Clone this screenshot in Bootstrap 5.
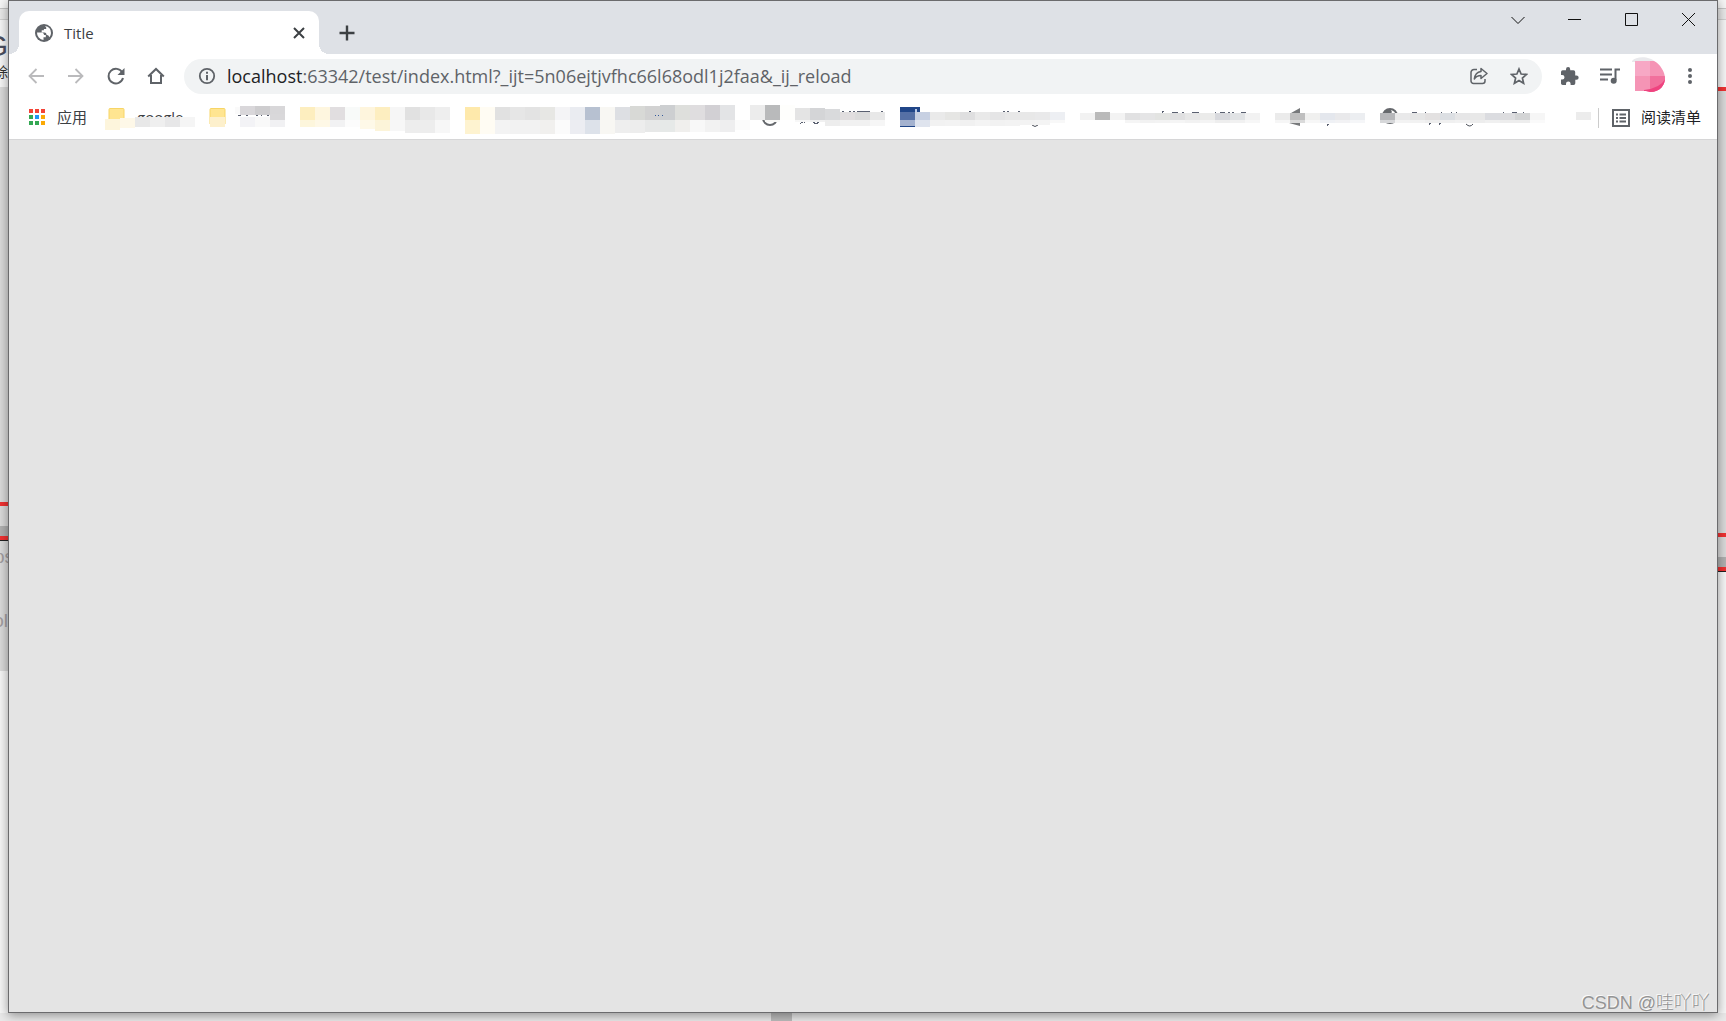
<!DOCTYPE html>
<html lang="zh-CN">
<head>
<meta charset="utf-8">
<meta name="viewport" content="width=device-width, initial-scale=1">
<title>Title</title>
<link href="https://cdn.jsdelivr.net/npm/bootstrap@5.3.0/dist/css/bootstrap.min.css" rel="stylesheet">
<style>
  body { font-family: "Open Sans", "Noto Sans CJK SC", sans-serif; background: #ebebeb; color: #3c4043; }
  svg { display: block; flex: none; }
  .edge { width: 8px; flex: none; }
  .edge > div { flex: none; overflow: hidden; white-space: nowrap; }
  .h8 { height: 8px; } .h12 { height: 12px; } .h20 { height: 20px; }
  .paper { background: #f6f6f6; }
  .band { background: #e9e9e9; border-top: 1px solid #c4c4c4; border-bottom: 1px solid #d0d0d0; }
  .shade { background: #dadada; }
  .thumb { background: #b0b0b0; height: 10px; }
  .redline { background: #f03232; height: 4px; }
  .blackline { border-bottom: 1px solid #222; }
  .left-head { height: 67px; padding-top: 10px; }
  .left-mid { height: 415px; }
  .left-low { height: 130px; color: #a39ea0; font: 19px/24px "Liberation Sans", sans-serif; padding-top: 4px; }
  .right-head { height: 67px; }
  .right-mid { height: 442px; }
  .clip-end { display: flex; justify-content: flex-end; }
  .clip-mid { display: flex; justify-content: center; }
  .big-letter { font: 30px/32px "Liberation Sans", sans-serif; color: #4d5060; }
  .cjk-cut { font-size: 14px; line-height: 20px; color: #333; }
  .low-text { margin-bottom: 40px; }
  .window { border: 1px solid #6b6b6d; box-shadow: 0 2px 10px rgba(0,0,0,.4); min-width: 0; z-index: 1; }
  .bottom-edge { height: 8px; background: #e9e9e9; padding-left: 45%; }
  .scroll-thumb { width: 21px; height: 8px; margin-left: -6px; background: #bcbcbc; }
  .tabstrip { background: #dee1e6; height: 53px; }
  .tab { width: 300px; height: 43px; margin: 10px 0 0 10px; padding: 0 14px 0 16px; background: #fff; border-radius: 10px 10px 0 0; position: relative; }
  .tab::before, .tab::after { content: ""; position: absolute; bottom: 0; width: 10px; height: 10px; }
  .tab::before { right: 100%; background: radial-gradient(circle at 0 0, transparent 10px, #fff 10px); }
  .tab::after { left: 100%; background: radial-gradient(circle at 100% 0, transparent 10px, #fff 10px); }
  .tab-title { font-size: 15px; line-height: 20px; margin-left: 11px; }
  .plain { border: 0; background: none; padding: 0; display: flex; align-items: center; justify-content: center; flex: none; color: #5f6368; }
  .newtab { width: 36px; height: 43px; margin: 10px 0 0 10px; }
  .cap { width: 57px; height: 37px; color: #111; }
  .toolbar { height: 44px; padding: 0 7px 0 7px; }
  .tool { width: 40px; height: 40px; }
  .faint { color: #bababc; }
  .omnibox { height: 35px; background: #f1f3f4; border-radius: 18px; margin-left: 8px; padding: 0 3px 0 14px; min-width: 0; }
  .url { font-size: 18px; line-height: 24px; padding-bottom: 1px; color: #5f6368; margin-left: 11px; outline: none; min-width: 0; white-space: nowrap; overflow: hidden; }
  .url span { color: #202124; }
  .bookmarks { height: 42px; padding: 0 16px 2px 20px; border-bottom: 1px solid #d6d6d7; background: #fff; }
  .bm { color: #3c4043; text-decoration: none; font-size: 15px; line-height: 20px; flex: none; position: relative; }
  .bm-row { gap: 15px; min-width: 0; overflow: hidden; height: 36px; align-items: center; }
  .bm svg { overflow: visible; }
  .folder-name { position: absolute; left: 32px; top: 7px; }
  .cover { position: relative; }
  .apps { width: 61px; gap: 11px; }
  .rule { width: 1px; height: 20px; background: #ccc; flex: none; }
  .reading { font-size: 15px; line-height: 20px; gap: 11px; color: #202124; margin-left: 13px; }
  .apps span, .reading span { padding-bottom: 2px; }
  .page { background: #e4e4e4; padding: 0 7px 0 0; }
  .watermark { font: 300 18px/18px "Liberation Sans", "Noto Sans CJK SC", sans-serif; color: #949494; text-shadow: -1px -1px 0 #fafafa; }
</style>
<script src="https://cdn.jsdelivr.net/npm/bootstrap@5.3.0/dist/js/bootstrap.bundle.min.js"></script>
</head>
<body class="vh-100 d-flex flex-column overflow-hidden">
<div class="d-flex flex-grow-1">
  <div class="edge d-flex flex-column">
    <div class="paper h8"></div><div class="band h12"></div>
    <div class="paper left-head">
      <div class="clip-end big-letter">G</div>
      <div class="cjk-cut clip-end">除</div>
    </div>
    <div class="shade left-mid"></div>
    <div class="redline"></div><div class="shade h20"></div><div class="thumb"></div>
    <div class="redline"></div><div class="blackline"></div>
    <div class="shade left-low"><div class="low-text clip-mid">ps</div><div class="clip-end">ol</div></div>
    <div class="paper flex-grow-1"></div>
  </div>

  <div class="window flex-grow-1 d-flex flex-column">
    <header class="tabstrip d-flex align-items-start">
      <div class="tab d-flex align-items-center">
        <svg width="18" height="18" viewBox="0 0 18 18"><circle cx="9" cy="9" r="9" fill="#5f6368"/><path d="M2 8.500h4.200q2.800 0 2.800 2.500h1.800v2.200H8.500V16A7.200 7.200 0 0 1 2 8.500zM10 2q6 .8 6 7-.1 2.500-1.500 4.300-.8-2.600-3-2.600 0-2.200-2-2.200H6.700V6.300h2.200V5h2.300V3.500z" fill="#fff"/></svg>
        <span class="tab-title flex-grow-1">Title</span>
        <button class="plain" aria-label="关闭标签页"><svg width="12" height="12" viewBox="0 0 12 12" stroke="#3c4043" stroke-width="2"><path d="M1 1l10 10M11 1L1 11"/></svg></button>
      </div>
      <button class="plain newtab" aria-label="新标签页"><svg width="16" height="16" viewBox="0 0 16 16" stroke="#3c4043" stroke-width="2.400"><path d="M8 .5v15M.5 8h15"/></svg></button>
      <div class="d-flex ms-auto">
        <button class="plain cap" aria-label="搜索标签页"><svg width="14" height="14" viewBox="0 0 14 14" fill="none" stroke="currentColor"><path d="M.5 4L7 10.500 13.500 4"/></svg></button>
        <button class="plain cap" aria-label="最小化"><svg width="13" height="13" viewBox="0 0 13 13" stroke="currentColor"><path d="M0 6.500h13"/></svg></button>
        <button class="plain cap" aria-label="最大化"><svg width="13" height="13" viewBox="0 0 13 13" fill="none" stroke="currentColor"><path d="M.5.5h12v12H.5z"/></svg></button>
        <button class="plain cap" aria-label="关闭"><svg width="13" height="13" viewBox="0 0 13 13" stroke="currentColor"><path d="M0 0l13 13M13 0L0 13"/></svg></button>
      </div>
    </header>

    <nav class="toolbar bg-white d-flex align-items-center">
      <button class="plain tool faint" aria-label="后退"><svg width="16" height="16" viewBox="0 0 16 16" fill="none" stroke="currentColor" stroke-width="1.800"><path d="M16 8H1.500M8.500 1l-7 7 7 7"/></svg></button>
      <button class="plain tool faint" aria-label="前进"><svg width="16" height="16" viewBox="0 0 16 16" fill="none" stroke="currentColor" stroke-width="1.800"><path d="M0 8h14.500M7.500 1l7 7-7 7"/></svg></button>
      <button class="plain tool" aria-label="重新加载"><svg width="18" height="18" viewBox="0 0 18 18"><path d="M15.300 5.500A7.300 7.300 0 1 0 16 11" fill="none" stroke="currentColor" stroke-width="2"/><path d="M17.500 1v7h-7z" fill="currentColor"/></svg></button>
      <button class="plain tool" aria-label="主页"><svg width="18" height="18" viewBox="0 0 18 18" fill="none" stroke="currentColor" stroke-width="2"><path d="M1.200 9.500L9 2l7.800 7.500M4 8v8h10V8"/></svg></button>
      <div class="omnibox flex-grow-1 d-flex align-items-center">
        <svg width="18" height="18" viewBox="0 0 18 18"><circle cx="9" cy="9" r="7.200" fill="none" stroke="#5f6368" stroke-width="1.800"/><path d="M8 4.800h2v2H8zM8 8h2v5.200H8z" fill="#5f6368"/></svg>
        <div class="url flex-grow-1" role="textbox" contenteditable="true" spellcheck="false" aria-label="地址栏"><span>localhost</span>:63342/test/index.html?_ijt=5n06ejtjvfhc66l68odl1j2faa&amp;_ij_reload</div>
        <button class="plain tool" aria-label="分享"><svg width="18" height="18" viewBox="0 0 18 18" fill="none" stroke="currentColor" stroke-width="1.500"><path d="M7 2.500H4a3 3 0 0 0-3 3V14a2.500 2.500 0 0 0 2.500 2.500h9A2.500 2.500 0 0 0 15 14v-2"/><path d="M11 1.500L17 6.500l-6 5V8.600C8 8.600 6 9.500 4.300 12 4.800 8 7 4.900 11 4.400z" stroke-linejoin="round"/></svg></button>
        <button class="plain tool" aria-label="收藏"><svg width="18" height="18" viewBox="0 0 18 18" fill="none" stroke="currentColor" stroke-width="1.700"><path d="M9 2l2.100 5 5.400.4-4.100 3.600 1.200 5.300L9 13.500l-4.600 2.800L5.600 11 1.500 7.400 6.900 7z"/></svg></button>
      </div>
      <div class="d-flex align-items-center ms-2">
        <button class="plain tool" aria-label="扩展程序"><svg width="18" height="18" viewBox="0 0 18 18" fill="currentColor"><path d="M15.500 8.500h-1.300V5a1.700 1.700 0 0 0-1.700-1.700H9.200V2.200a2.100 2.100 0 0 0-4.200 0v1.100H1.700A1.700 1.700 0 0 0 0 5v3h1.200a2.300 2.300 0 0 1 0 4.600H0v3.600A1.700 1.700 0 0 0 1.700 18H5v-1.200a2.300 2.300 0 0 1 4.600 0V18h3a1.700 1.700 0 0 0 1.700-1.700v-3.500h1.200a2.150 2.150 0 0 0 0-4.300z"/></svg></button>
        <button class="plain tool" aria-label="媒体控制"><svg width="20" height="16" viewBox="0 0 20 16"><path d="M0 1.500h12M0 6.500h12M0 11.500h8" stroke="currentColor" stroke-width="2"/><path d="M15.500 1v11M14.500 1.500H20" stroke="currentColor" stroke-width="2"/><circle cx="13.700" cy="12.700" r="3" fill="currentColor"/></svg></button>
        <button class="plain tool" aria-label="个人资料"><svg width="36" height="38" viewBox="0 0 36 38"><path d="M0 4C4-1 18-1 23 5H0z" fill="#e9e9ec"/><clipPath id="face"><path d="M3 4h19c6 3 11 11 11 17 0 7-5 14-15 14l-4-1H3z"/></clipPath><g clip-path="url(#face)"><path d="M3 3h31v33H3z" fill="#f594b5"/><path d="M3 4h15v15H3z" fill="#f7a8c5"/><path d="M18 19h16v17H18z" fill="#f1709c"/><path d="M34 20Q30 31 12 33v3h22z" fill="#ef437f"/></g></svg></button>
        <button class="plain tool" aria-label="菜单"><svg width="4" height="16" viewBox="0 0 4 16" fill="currentColor"><circle cx="2" cy="2" r="2"/><circle cx="2" cy="8" r="2"/><circle cx="2" cy="14" r="2"/></svg></button>
      </div>
    </nav>

    <nav class="bookmarks d-flex align-items-center">
      <div class="bm-row d-flex flex-grow-1">
        <a href="#" class="bm apps d-flex align-items-center"><svg width="17" height="17" viewBox="0 0 17 17"><path d="M0 0h4v4H0zM6 0h4v4H6zM12 0h4v4h-4z" fill="#f44336"/><path d="M0 6h4v4H0zM0 12h4v4H0zM6 12h4v4H6z" fill="#34a853"/><path d="M6 6h4v4H6z" fill="#2196f3"/><path d="M12 6h4v4h-4zM12 12h4v4h-4z" fill="#fba905"/></svg><span>应用</span></a>
        <a href="#" class="bm"><span class="folder-name">google</span><svg class="cover" data-mosaic="0"></svg></a>
        <a href="#" class="bm" aria-label="书签 2"><svg data-mosaic="1"></svg></a>
        <a href="#" class="bm" aria-label="书签 3"><svg data-mosaic="2"></svg></a>
        <a href="#" class="bm" aria-label="书签 4"><svg data-mosaic="3"></svg></a>
        <a href="#" class="bm" aria-label="书签 5"><svg data-mosaic="4"></svg></a>
        <a href="#" class="bm" aria-label="书签 6"><svg data-mosaic="5"></svg></a>
        <a href="#" class="bm" aria-label="书签 7"><svg data-mosaic="6"></svg></a>
        <a href="#" class="bm" aria-label="书签 8"><svg data-mosaic="7"></svg></a>
        <a href="#" class="bm" aria-label="书签 9"><svg data-mosaic="8"></svg></a>
        <a href="#" class="bm ms-3" aria-label="更多书签"><svg data-mosaic="9"></svg></a>
      </div>
      <div class="rule"></div>
      <button class="plain reading"><svg width="18" height="18" viewBox="0 0 18 18"><path d="M1 1h16v16H1z" fill="none" stroke="#5f6368" stroke-width="2"/><path d="M4 4.500h2v2H4zM4 8h2v2H4zM4 11.500h2v2H4zM7.500 4.500H14v2H7.500zM7.500 8H14v2H7.500zM7.500 11.500H14v2H7.500z" fill="#5f6368"/></svg><span>阅读清单</span></button>
    </nav>

    <main class="page flex-grow-1 d-flex align-items-end justify-content-end"><span class="watermark">CSDN @哇吖吖</span></main>
  </div>

  <div class="edge d-flex flex-column">
    <div class="paper h8"></div><div class="band h12"></div><div class="paper right-head"></div>
    <div class="redline"></div><div class="shade right-mid"></div>
    <div class="redline"></div><div class="shade h20"></div><div class="thumb"></div>
    <div class="redline"></div><div class="blackline"></div><div class="paper flex-grow-1"></div>
  </div>
</div>
<div class="bottom-edge flex-shrink-0"><div class="scroll-thumb"></div></div>

<script>
// Each bookmark: width, drawing below the tiles, then tile rows [x, top, bottom, colours]; a tile is 15px wide.
const folder = '<path d="M1 8.500h13q1 0 1 1V24H0V9.500q0-1 1-1z" fill="#ffe591" stroke="#f7d566"/>';
const globe = '<circle cx="10" cy="16" r="7" fill="#fff" stroke="#66696d" stroke-width="2"/><path d="M4 12q6-6 8 0l-3 4z" fill="#66696d"/>';
const dash = (y, ...xs) => xs.map(([x, w]) => `<path d="M${x} ${y}h${w}v1h-${w}z" fill="#5a6070"/>`).join('');
const marks = [
  [90, '<g transform="translate(4 0)">' + folder + '</g><path d="M30 17h60v19H30z" fill="#fff"/>', [[0,19,30,'#fdf5dc'],[15,18,28,'#fef8e8'],[30,17,27,'#e8e8e8 #efefef #e7e7e8 #f5f5f5']]],
  [75, folder + dash(15,[28,3],[36,2],[46,2],[51,1],[57,2],[63,2]), [[0,17,27,'#fdf0cc'],[25,7,14,'#fafafa'],[30,6,15,'#d9d7da #cecdcf #d8d7d9'],[30,17,27,'#f3f3f6 #f9f9f9 #f1f1f3'],[60,14,20,'#d9d8da']]],
  [150, '', [[0,7,20,'#fdeebf #fef6df #e1dee0 #f8faf9 #fef5dd #fdeec0 #f6f6f6 #e1e1e1 #e8e8e8 #eeeeee'],[0,20,27,'#fdf6dc #fef8e6 #f2f2f3 #fcfcfc'],[60,20,29,'#fef9e8'],[75,20,31,'#fcf4d9 #f7f7f7'],[105,20,33,'#ededed #ededed #f7f7f7']]],
  [270, '', [[0,7,20,'#fee9ab #fffcf3 #e1e1e1 #e6e6e6 #e3e3e3 #e7e7e4 #f4f4f6 #eaecf1 #b7c1d1 #f8f7f3 #dddfe3'],[165,6,20,'#d8d9d6 #d2d2d2'],[195,5,20,'#cdcfd1 #dedfdc #dfdddf #d2d0d4 #e3e4e6'],[0,20,34,'#fef3d0 #fffcf3 #f3f3f3 #f2f2f2 #f2f2f2 #f1f0ee #fbfbfb #ecedf2 #dde2ea #f8f7f3'],[150,20,33,'#eeeeee #ededed'],[180,20,32,'#e7e8e8 #e6e9e8 #f0efed #f8f8f8 #f2f2f2 #eeeeef'],[270,20,30,'#fbfbfb']], '<path d="M190 15.500h1M193 15.500h1M197 15.500h1" stroke="#345a9c"/>'],
  [135, '<g transform="translate(10 2)">' + globe + '</g>' + dash(11,[92,2],[99,2],[103,2],[107,13],[131,2]) + dash(22,[51,2],[54,1],[63,2],[67,2]) + dash(23,[50,1],[64,4]), [[0,5,20,'#ececec #b9babb'],[30,5,20,'#fefefc'],[45,8,20,'#e4e4e4 #d4d5d7'],[75,9,20,'#d9dadc'],[90,12,20,'#e1dedf #dbdbdb #e8e8e8'],[15,20,22,'#f8f8f6'],[45,20,22,'#f7f7f7 #f1f1f1'],[75,20,26,'#ededed #f1f1f1 #f1f1f1 #f6f6f6']]],
  [165, '<path d="M0 7h20v20H0z" fill="#204688"/><path d="M15 9h2v4h-2z" fill="#b9c8e6"/>' + dash(11,[69,2],[103,2],[107,2],[118,2]) + '<path d="M132 25q3 3 6 0" stroke="#4a4e58" fill="none"/>', [[0,12,20,'#5570a5 #c7d0e2 #eaeaea #e6e6e4 #dfdfe0 #e9e9e9 #e5e5e6 #e8e8e8 #e8e8e8 #e9e9ea #edeff3'],[0,20,26,'#a4b2cf'],[15,20,27,'#dfe4ee'],[30,20,26,'#f2f2f2 #f3f3f3 #f1f1f1 #f4f4f4 #f2f2f2 #f3f3f3'],[120,20,25,'#f3f3f3 #f4f4f4'],[150,20,23,'#f8f8f8']]],
  [180, dash(11,[82,2]) + dash(12,[82,1],[92,6],[102,2],[112,7],[135,1],[140,5],[148,2],[152,2],[161,5]), [[0,13,20,'#f2f2f2'],[15,12,20,'#bababa'],[30,13,20,'#f3f3f3 #e1e1e2 #e5e5e6 #e3e4e2 #e0e0e1 #e7e7e7 #ebebea #d8d9dd #e1e3e5 #f2f2f2'],[45,20,23,'#f5f5f5 #f2f2f2 #f3f3f3 #f5f5f5 #f2f2f2 #f4f4f4 #eeeeee #f1f1f1 #f7f7f7']]],
  [90, '<path d="M25 8l-9 5h9zM14 23l11 3v-3z" fill="#77797b"/>' + dash(24,[52,2]) + dash(25,[52,1]), [[0,13,20,'#ebebeb #bfbfbf #f0f0ef #e4e7ed #e9e9eb #eceef1'],[0,20,23,'#f6f6f6 #dadada #f7f7f7 #eff1f5 #f2f2f4 #f5f6f8']]],
  [165, globe + dash(12,[32,5],[45,1],[61,1],[71,1],[76,1],[123,1],[132,5],[143,1]) + dash(23,[49,2],[59,2]) + dash(24,[49,1],[59,1]) + '<path d="M86 24q4 4 7 0" stroke="#4a4e58" fill="none"/>', [[0,13,20,'#b6b7ba #e9e9ea #e6e6e6 #e3e1e1 #dcdfe3 #e6e6e7 #e8e8e8 #dbdce0 #dddddf #d3d4d5 #f6f6f6'],[0,20,23,'#d6d7d9 #f3f3f3 #f2f2f2 #eeeeee #f0f0f0 #f2f2f2 #ededed #f0f0f0 #ededed #ededed #fafafa']]],
  [15, '', [[0,12,20,'#ececec']]]
];
document.querySelectorAll('[data-mosaic]').forEach(svg => {
  const [w, under, rows, over = ''] = marks[svg.dataset.mosaic];
  svg.setAttribute('width', w);
  svg.setAttribute('height', 36);
  svg.innerHTML = under + rows.map(([x, t, b, c]) => c.split(' ').map((f, i) =>
    `<path d="M${x + i * 15} ${t}h15v${b - t}h-15z" fill="${f}"/>`).join('')).join('') + over;
});
</script>
</body>
</html>
